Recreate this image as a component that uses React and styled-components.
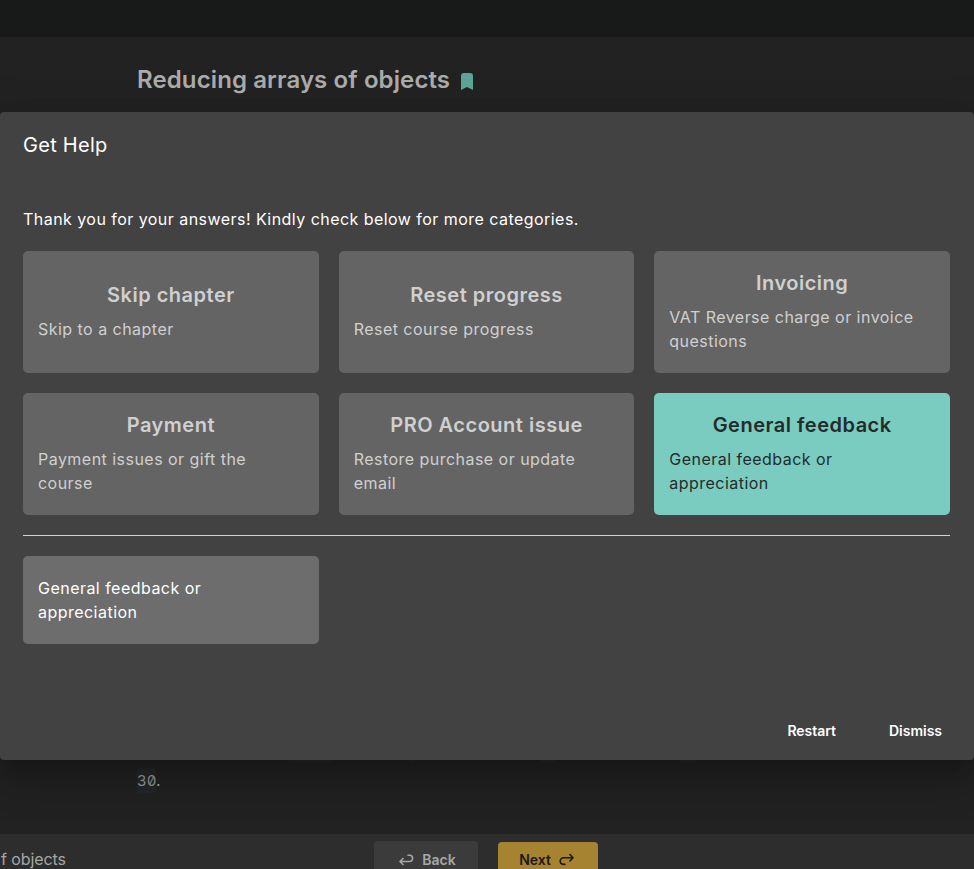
import React from "react";
import styled, { createGlobalStyle } from "styled-components";

const GlobalStyle = createGlobalStyle`
  *, *::before, *::after { box-sizing: border-box; }
  html, body { margin: 0; overflow: hidden; background: #222; }
  body { font-family: Inter, "Liberation Sans", sans-serif; }
  h1, h2, h3, p { margin: 0; }
  button { font-family: inherit; border: 0; }
`;

const Page = styled.div`
  position: relative;
  display: flex;
  flex-direction: column;
  width: 100%;
  height: 100vh;
  overflow: hidden;
  background: #222222;
`;

const TopBar = styled.header`
  flex: none;
  height: 37px;
  background: #181a19;
`;

const Lesson = styled.main`
  flex: 1;
  display: flex;
  flex-direction: column;
  padding: 24px 137px 41px;
`;

const TitleRow = styled.div`
  display: flex;
  align-items: center;
  gap: 11px;
  height: 38px;
`;

const LessonTitle = styled.h1`
  font-size: 24px;
  font-weight: 600;
  line-height: 38px;
  letter-spacing: 0.11px;
  color: #acacac;
  white-space: nowrap;
`;

const BookmarkIcon = styled.svg`
  width: 12px;
  height: 17px;
  margin-top: 2px;
`;

const Paragraph = styled.div`
  margin-top: auto;
  display: flex;
  flex-direction: column;
  gap: 6px;
  color: #a3a3a3;
  font-size: 16px;
  line-height: 24px;
`;

const CodeLine = styled.div`
  display: flex;
  height: 25px;
`;

const CodeBox = styled.span`
  flex: none;
  height: 25px;
  width: ${(p) => p.$width}px;
  margin-left: ${(p) => p.$before}px;
  border-radius: 3px;
  background: #25282a;
`;

const Code = styled.code`
  width: 19px;
  height: 25px;
  border-radius: 3px;
  background: #25282a;
  color: #989898;
  font: 15px/25px Inter, monospace;
  font-feature-settings: "zero", "tnum";
`;

const Footer = styled.footer`
  flex: none;
  display: flex;
  height: 35px;
  background: #2d2d2d;
`;

const Breadcrumb = styled.span`
  width: 374px;
  padding-top: 12px;
  padding-left: 1px;
  font-size: 16px;
  line-height: 27px;
  letter-spacing: -0.1px;
  color: #a6a6a6;
  white-space: nowrap;
`;

const NavButton = styled.button`
  display: flex;
  flex: none;
  align-items: center;
  justify-content: center;
  gap: 8px;
  width: ${(p) => (p.$primary ? 100 : 104)}px;
  height: ${(p) => (p.$primary ? 36 : 38)}px;
  margin-top: ${(p) => (p.$primary ? 8 : 7)}px;
  margin-right: 20px;
  padding: ${(p) => (p.$primary ? "0 3px 1px 0" : "0 0 1px 3px")};
  border-radius: 4px;
  background: ${(p) => (p.$primary ? "#a68331" : "#3b3b3b")};
  color: ${(p) => (p.$primary ? "#1b1a17" : "#a8a8a8")};
  font-size: 14px;
  font-weight: 600;
`;

const ArrowIcon = styled.svg`
  width: 15px;
  height: 13px;
  fill: none;
  stroke: currentColor;
  stroke-width: 1.6;
  stroke-linecap: round;
  stroke-linejoin: round;
`;

const Dialog = styled.section`
  position: absolute;
  top: 112px;
  left: 0;
  display: flex;
  flex-direction: column;
  width: 974px;
  height: 648px;
  padding: 17px 24px 13px 23px;
  border-radius: 4px;
  background: #424242;
  color: #fff;
  box-shadow: 0 11px 15px -7px rgba(0, 0, 0, 0.2),
    0 24px 38px 3px rgba(0, 0, 0, 0.14), 0 9px 46px 8px rgba(0, 0, 0, 0.12);
`;

const DialogTitle = styled.h2`
  font-size: 20px;
  font-weight: 400;
  line-height: 32px;
  letter-spacing: 0.28px;
`;

const Intro = styled.p`
  margin-top: 46px;
  font-size: 16px;
  line-height: 24px;
  letter-spacing: 0.455px;
`;

const CardGrid = styled.div`
  display: grid;
  grid-template-columns: repeat(3, 1fr);
  grid-auto-rows: 122px;
  gap: 20px;
  margin-top: 20px;
`;

const Card = styled.button`
  display: flex;
  flex-direction: column;
  justify-content: center;
  padding: 0 15px 4px;
  border-radius: 5px;
  text-align: left;
  background: ${(p) => (p.$selected ? "#7acbc0" : "#646464")};
  color: ${(p) => (p.$selected ? "#242c2b" : "#d0d0d0")};
`;

const CardTitle = styled.h3`
  align-self: center;
  margin-bottom: 6px;
  font-size: 20px;
  font-weight: 600;
  line-height: 32px;
  letter-spacing: 0.5px;
`;

const CardText = styled.p`
  font-size: 16px;
  font-weight: 400;
  line-height: 24px;
  letter-spacing: 0.47px;
`;

const Divider = styled.hr`
  width: 100%;
  height: 1px;
  margin: 20px 0;
  border: 0;
  background: #d2d2d2;
`;

const OptionGrid = styled(CardGrid)`
  grid-auto-rows: 88px;
  margin-top: 0;
`;

const Option = styled(Card)`
  padding: 0 100px 0 15px;
  background: #6d6d6d;
  color: #fff;
`;

const Actions = styled.div`
  display: flex;
  justify-content: flex-end;
  gap: 37px;
  margin-top: auto;
`;

const ActionButton = styled.button`
  height: 34px;
  padding: 0 8px;
  background: transparent;
  color: #fff;
  font-size: 14px;
  font-weight: 600;
  letter-spacing: -0.02px;
`;

const categories = [
  ["Skip chapter", "Skip to a chapter"],
  ["Reset progress", "Reset course progress"],
  ["Invoicing", "VAT Reverse charge or invoice questions"],
  ["Payment", "Payment issues or gift the course"],
  ["PRO Account issue", "Restore purchase or update email"],
  ["General feedback", "General feedback or appreciation"],
];

export default function App() {
  return (
    <Page>
      <GlobalStyle />
      <TopBar />
      <Lesson>
        <TitleRow>
          <LessonTitle>Reducing arrays of objects</LessonTitle>
          <BookmarkIcon viewBox="0 0 12 17">
            <path d="M0 17V3Q0 0 3 0H9Q12 0 12 3V17L6 14Z" fill="#5da598" />
          </BookmarkIcon>
        </TitleRow>
        <Paragraph>
          <CodeLine>
            <CodeBox $before={151} $width={47} />
            <CodeBox $before={73} $width={8} />
            <CodeBox $before={123} $width={18} />
            <CodeBox $before={122} $width={18} />
          </CodeLine>
          <CodeLine>
            <Code>30</Code>.
          </CodeLine>
        </Paragraph>
      </Lesson>
      <Footer>
        <Breadcrumb>f objects</Breadcrumb>
        <NavButton>
          <ArrowIcon viewBox="0 0 15 13">
            <path d="M4 5.5L1 8.5L4 11.5M1 8.5H10.5A3.1 3.1 0 0 0 10.5 2.3H9" />
          </ArrowIcon>
          Back
        </NavButton>
        <NavButton $primary>
          Next
          <ArrowIcon viewBox="0 0 15 13">
            <path d="M11 1.5L14 4.8L11 8M14 4.8H4.5A3.3 3.3 0 0 0 4.5 11.4H6" />
          </ArrowIcon>
        </NavButton>
      </Footer>
      <Dialog role="dialog">
        <DialogTitle>Get Help</DialogTitle>
        <Intro>Thank you for your answers! Kindly check below for more categories.</Intro>
        <CardGrid>
          {categories.map(([title, text], i) => (
            <Card key={title} $selected={i === 5}>
              <CardTitle>{title}</CardTitle>
              <CardText>{text}</CardText>
            </Card>
          ))}
        </CardGrid>
        <Divider />
        <OptionGrid>
          <Option>
            <CardText>General feedback or appreciation</CardText>
          </Option>
        </OptionGrid>
        <Actions>
          <ActionButton>Restart</ActionButton>
          <ActionButton>Dismiss</ActionButton>
        </Actions>
      </Dialog>
    </Page>
  );
}
